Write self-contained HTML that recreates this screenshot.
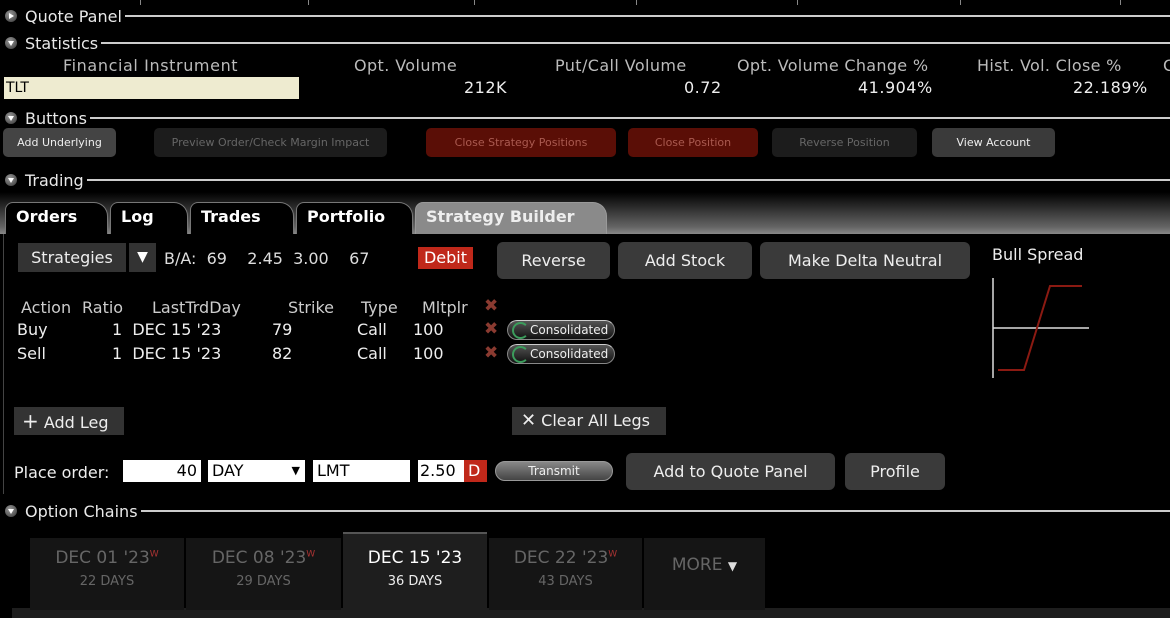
<!DOCTYPE html>
<html><head><meta charset="utf-8"><style>
*{margin:0;padding:0;box-sizing:border-box}
body{width:1170px;height:618px;background:#000;color:#ddd;font-family:"DejaVu Sans","Liberation Sans",sans-serif;font-size:15px;position:relative;overflow:hidden}
.a{position:absolute;white-space:nowrap}
.hdr{position:absolute;left:5px;height:20px;display:flex;align-items:center;width:1165px;font-size:16px;color:#e8e8e8}
.hdr .ic{width:12px;height:12px;border-radius:50%;background:radial-gradient(circle at 40% 35%,#999,#333);margin-right:8px;position:relative;flex:none}
.hdr .ic:after{content:"";position:absolute;left:3px;top:4px;border-left:3px solid transparent;border-right:3px solid transparent;border-top:5px solid #fff}
.hdr .ic.r:after{left:4px;top:3px;border-top:3px solid transparent;border-bottom:3px solid transparent;border-left:5px solid #fff;border-right:0}
.hdr .ln{flex:1;height:2px;background:#ccc;margin-left:3px}
.st{position:absolute;font-size:16px;color:#bbb;white-space:nowrap}
.sv{position:absolute;font-size:16px;color:#eee;white-space:nowrap;letter-spacing:0.5px}
.sb{position:absolute;height:29px;border-radius:5px;font-size:11px;display:flex;align-items:center;justify-content:center;top:128px}
.btn{position:absolute;height:37px;border-radius:6px;background:#3a3a3a;color:#eee;font-size:16px;display:flex;align-items:center;justify-content:center;top:242px}
.tab{position:absolute;top:202px;height:32px;border:1px solid #777;border-bottom:none;border-radius:8px 14px 0 0;background:#000;color:#fff;font-weight:bold;font-size:16px;padding:4px 0 0 10px}
.x{color:#8a3a30;font-weight:bold;font-size:17px}
.cons{position:absolute;width:108px;height:20px;border-radius:10px;border:1px solid #888;border-top-color:#ccc;background:linear-gradient(#555,#111);font-size:12px;color:#eee;padding-left:22px;line-height:18px}
.cons:before{content:"";position:absolute;left:4px;top:1px;width:13px;height:13px;border:2px solid #3c9c5c;border-right-color:transparent;border-radius:50%}
.inp{position:absolute;top:460px;height:22px;background:#fff;color:#000;font-size:16px;line-height:22px;padding:0 4px}
.ct{position:absolute;top:538px;height:72px;background:#151515;text-align:center}
.ct .d{font-size:17px;color:#666;margin-top:10px}
.ct .s{font-size:13px;color:#666;margin-top:6px}
.ct sup{color:#a33;font-size:9px}
</style></head><body>
<div class="a" style="left:140px;top:0;width:1px;height:5px;background:#888"></div>
<div class="a" style="left:308px;top:0;width:1px;height:5px;background:#888"></div>
<div class="a" style="left:474px;top:0;width:1px;height:5px;background:#888"></div>
<div class="a" style="left:636px;top:0;width:1px;height:5px;background:#888"></div>
<div class="a" style="left:797px;top:0;width:1px;height:5px;background:#888"></div>
<div class="a" style="left:960px;top:0;width:1px;height:5px;background:#888"></div>
<div class="a" style="left:1120px;top:0;width:1px;height:5px;background:#888"></div>

<div class="hdr" style="top:6px"><span class="ic r"></span>Quote Panel<span class="ln"></span></div>
<div class="hdr" style="top:33px"><span class="ic"></span>Statistics<span class="ln"></span></div>
<div class="st" style="left:63px;top:56px;letter-spacing:0.6px">Financial Instrument</div>
<div class="st" style="left:354px;top:56px;letter-spacing:0.4px">Opt. Volume</div>
<div class="st" style="left:555px;top:56px;letter-spacing:0.4px">Put/Call Volume</div>
<div class="st" style="left:737px;top:56px;letter-spacing:0.3px">Opt. Volume Change %</div>
<div class="st" style="left:977px;top:56px;letter-spacing:0.3px">Hist. Vol. Close %</div>
<div class="st" style="left:1163px;top:56px">C</div>
<div class="a" style="left:4px;top:77px;width:295px;height:22px;background:#eeebd0;color:#000;font-size:14px;line-height:22px;padding-left:2px">TLT</div>
<div class="sv" style="left:464px;top:78px">212K</div>
<div class="sv" style="left:684px;top:78px">0.72</div>
<div class="sv" style="left:858px;top:78px">41.904%</div>
<div class="sv" style="left:1073px;top:78px">22.189%</div>

<div class="hdr" style="top:108px"><span class="ic"></span>Buttons<span class="ln"></span></div>
<div class="sb" style="left:3px;width:113px;background:#444;color:#eee">Add Underlying</div>
<div class="sb" style="left:154px;width:233px;background:#1c1c1c;color:#666">Preview Order/Check Margin Impact</div>
<div class="sb" style="left:426px;width:190px;background:#5a0e06;color:#aa5a50">Close Strategy Positions</div>
<div class="sb" style="left:628px;width:130px;background:#5a0e06;color:#aa5a50">Close Position</div>
<div class="sb" style="left:772px;width:145px;background:#1c1c1c;color:#666">Reverse Position</div>
<div class="sb" style="left:932px;width:123px;background:#3a3a3a;color:#eee">View Account</div>

<div class="hdr" style="top:170px"><span class="ic"></span>Trading<span class="ln"></span></div>
<div class="a" style="left:0;top:190px;width:1170px;height:44px;background:linear-gradient(#000 5%,#666 85%,#888)"></div>
<div class="tab" style="left:5px;width:103px">Orders</div>
<div class="tab" style="left:110px;width:78px">Log</div>
<div class="tab" style="left:190px;width:104px">Trades</div>
<div class="tab" style="left:296px;width:117px">Portfolio</div>
<div class="tab" style="left:415px;width:192px;background:#8a8a8a;border-color:#999;color:#eee">Strategy Builder</div>
<div class="a" style="left:3px;top:234px;width:1px;height:260px;background:#444"></div>

<div class="a" style="left:18px;top:243px;width:108px;height:29px;background:#333;color:#eee;font-size:16px;line-height:29px;text-align:center">Strategies</div>
<div class="a" style="left:129px;top:243px;width:27px;height:29px;background:#333;color:#fff;font-size:14px;line-height:29px;text-align:center">▼</div>
<div class="a" style="left:164px;top:249px;font-size:16px;color:#ddd">B/A: &nbsp;69 &nbsp;&nbsp;&nbsp;2.45 &nbsp;3.00 &nbsp;&nbsp;&nbsp;67</div>
<div class="a" style="left:418px;top:247px;width:55px;height:22px;background:#c0281a;color:#fff;font-size:16px;line-height:22px;text-align:center">Debit</div>
<div class="btn" style="left:497px;width:113px">Reverse</div>
<div class="btn" style="left:618px;width:134px">Add Stock</div>
<div class="btn" style="left:760px;width:210px">Make Delta Neutral</div>
<div class="a" style="left:992px;top:245px;font-size:16px;color:#eee">Bull Spread</div>
<svg class="a" style="left:990px;top:278px" width="105" height="102"><line x1="3" y1="0" x2="3" y2="100" stroke="#ddd" stroke-width="1.5"/><line x1="3" y1="50" x2="99" y2="50" stroke="#ddd" stroke-width="1.5"/><polyline points="8,92 34,92 60,8 92,8" fill="none" stroke="#8b1a12" stroke-width="2"/></svg>

<div class="a" style="left:21px;top:298px;color:#ccc;font-size:16px">Action</div>
<div class="a" style="left:82px;top:298px;color:#ccc;font-size:16px">Ratio</div>
<div class="a" style="left:152px;top:298px;color:#ccc;font-size:16px">LastTrdDay</div>
<div class="a" style="left:288px;top:298px;color:#ccc;font-size:16px">Strike</div>
<div class="a" style="left:361px;top:298px;color:#ccc;font-size:16px">Type</div>
<div class="a" style="left:422px;top:298px;color:#ccc;font-size:16px">Mltplr</div>
<div class="a x" style="left:484px;top:296px">✖</div>
<div class="a" style="left:17px;top:320px;font-size:16px;color:#eee">Buy</div>
<div class="a" style="left:112px;top:320px;font-size:16px;color:#eee">1 &nbsp;DEC 15 '23</div>
<div class="a" style="left:272px;top:320px;font-size:16px;color:#eee">79</div>
<div class="a" style="left:357px;top:320px;font-size:16px;color:#eee">Call</div>
<div class="a" style="left:413px;top:320px;font-size:16px;color:#eee">100</div>
<div class="a x" style="left:484px;top:319px">✖</div>
<div class="cons" style="left:507px;top:320px">Consolidated</div>
<div class="a" style="left:17px;top:344px;font-size:16px;color:#eee">Sell</div>
<div class="a" style="left:112px;top:344px;font-size:16px;color:#eee">1 &nbsp;DEC 15 '23</div>
<div class="a" style="left:272px;top:344px;font-size:16px;color:#eee">82</div>
<div class="a" style="left:357px;top:344px;font-size:16px;color:#eee">Call</div>
<div class="a" style="left:413px;top:344px;font-size:16px;color:#eee">100</div>
<div class="a x" style="left:484px;top:343px">✖</div>
<div class="cons" style="left:507px;top:344px">Consolidated</div>

<div class="a" style="left:14px;top:407px;width:110px;height:28px;background:#333;color:#eee;font-size:16px;line-height:28px;padding-left:8px"><span style="font-size:20px">+</span> Add Leg</div>
<div class="a" style="left:512px;top:407px;width:154px;height:28px;background:#333;color:#eee;font-size:16px;line-height:28px;padding-left:9px"><span style="font-size:18px;font-weight:lighter">✕</span> Clear All Legs</div>

<div class="a" style="left:14px;top:463px;font-size:16px;color:#eee">Place order:</div>
<div class="inp" style="left:123px;width:78px;text-align:right">40</div>
<div class="inp" style="left:208px;width:97px">DAY<span style="position:absolute;right:5px;font-size:11px">▼</span></div>
<div class="inp" style="left:313px;width:97px">LMT</div>
<div class="inp" style="left:418px;width:46px;padding:0 2px">2.50</div>
<div class="inp" style="left:464px;width:23px;background:#c0281a;color:#fff;padding:0 4px">D</div>
<div class="a" style="left:495px;top:461px;width:118px;height:20px;border-radius:10px;background:linear-gradient(#888,#444);border:1px solid #999;color:#eee;font-size:12px;line-height:18px;text-align:center">Transmit</div>
<div class="btn" style="left:626px;top:453px;width:209px">Add to Quote Panel</div>
<div class="btn" style="left:845px;top:453px;width:100px">Profile</div>

<div class="hdr" style="top:501px"><span class="ic"></span>Option Chains<span class="ln"></span></div>
<div class="a" style="left:12px;top:608px;width:1158px;height:10px;background:#1e1e1e"></div>
<div class="ct" style="left:30px;width:154px"><div class="d">DEC 01 '23<sup>W</sup></div><div class="s">22 DAYS</div></div>
<div class="ct" style="left:186px;width:155px"><div class="d">DEC 08 '23<sup>W</sup></div><div class="s">29 DAYS</div></div>
<div class="ct" style="left:343px;top:532px;height:86px;width:144px;background:#1e1e1e;border-top:2px solid #555"><div class="d" style="color:#fff;margin-top:14px">DEC 15 '23</div><div class="s" style="color:#eee">36 DAYS</div></div>
<div class="ct" style="left:489px;width:153px"><div class="d">DEC 22 '23<sup>W</sup></div><div class="s">43 DAYS</div></div>
<div class="ct" style="left:644px;width:121px"><div class="d" style="margin-top:17px">MORE <span style="font-size:12px;color:#ddd">▼</span></div></div>
</body></html>
